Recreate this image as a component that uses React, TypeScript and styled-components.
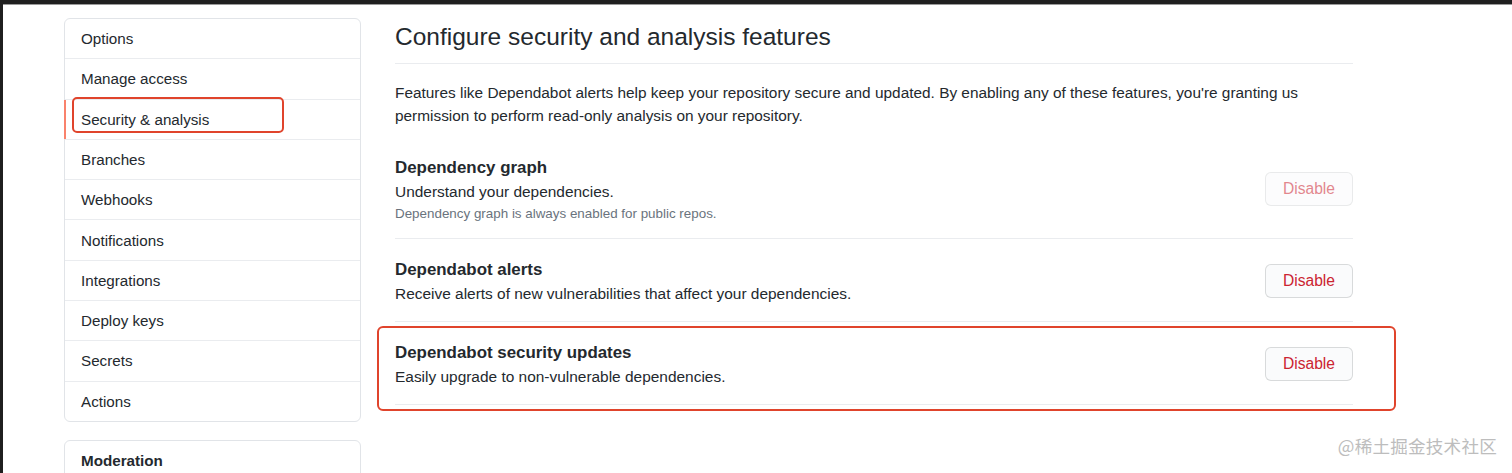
import React from "react";
import styled, { createGlobalStyle } from "styled-components";

const Global = createGlobalStyle`
  html, body { margin: 0; padding: 0; background: #fff; }
  body {
    font-family: "Liberation Sans", Arial, sans-serif;
    color: #24292e;
    -webkit-font-smoothing: antialiased;
  }
`;

const Frame = styled.div`
  position: relative;
  box-sizing: border-box;
  height: 473px;
  border-top: 4px solid #1f1f1f;
  border-left: 3px solid #1f1f1f;
  overflow: hidden;
`;

const TopLine = styled.div`
  height: 1px;
  background: #9a9a9a;
`;

const Layout = styled.div`
  display: flex;
  align-items: flex-start;
  gap: 34px;
  padding: 13px 0 0 61px;
`;

const Sidebar = styled.nav`
  width: 297px;
  flex: none;
  display: flex;
  flex-direction: column;
  gap: 18px;
`;

const Menu = styled.div<{ $tall?: boolean }>`
  border: 1px solid #e1e4e8;
  border-radius: 6px;
  background: #fff;
  min-height: ${(p) => (p.$tall ? "120px" : "0")};
`;

const MenuItem = styled.div<{ $selected?: boolean; $heading?: boolean }>`
  position: relative;
  padding: 9.15px 16px;
  font-size: 15.2px;
  line-height: 21px;
  font-weight: ${(p) => (p.$heading ? 700 : 400)};
  color: #24292e;
  border-bottom: 1px solid #eaecef;
  &:last-child { border-bottom: none; }
  ${(p) =>
    p.$selected &&
    `
    &::before {
      content: "";
      position: absolute;
      left: -1px;
      top: 0;
      bottom: 0;
      width: 2px;
      background: #f9826c;
    }
  `}
`;

const Callout = styled.div`
  position: absolute;
  border: 2.5px solid #e0442c;
  border-radius: 5px;
  pointer-events: none;
`;

const SideCallout = styled(Callout)`
  left: 7px;
  top: -3px;
  width: 208px;
  height: 32px;
`;

const Main = styled.main`
  width: 958px;
  flex: none;
`;

const Heading = styled.h2`
  margin: 1px 0 0;
  padding-bottom: 8px;
  border-bottom: 1px solid #eaecef;
  font-size: 24.5px;
  font-weight: 400;
  line-height: 36px;
  color: #24292e;
`;

const Intro = styled.p`
  margin: 17px 0 10px;
  font-size: 15.4px;
  line-height: 23px;
  color: #24292e;
`;

const Feature = styled.section`
  position: relative;
  display: flex;
  align-items: center;
  justify-content: space-between;
  padding: 19px 0 15px;
  border-bottom: 1px solid #eaecef;
`;

const FeatureText = styled.div`
  display: flex;
  flex-direction: column;
`;

const FeatureTitle = styled.h3`
  margin: 0;
  font-size: 16.9px;
  font-weight: 700;
  line-height: 24px;
  color: #24292e;
`;

const FeatureDesc = styled.div`
  font-size: 15.45px;
  line-height: 24px;
  color: #24292e;
`;

const FeatureNote = styled.div`
  font-size: 13.4px;
  line-height: 19px;
  color: #6a737d;
`;

const DangerButton = styled.button<{ $disabled?: boolean }>`
  width: 88px;
  height: 34px;
  box-sizing: border-box;
  margin-top: -2px;
  border: 1px solid rgba(27, 31, 35, 0.15);
  border-radius: 6px;
  background: #fafbfc;
  color: #cb2431;
  font-family: "Liberation Sans", Arial, sans-serif;
  font-size: 15.6px;
  font-weight: 500;
  padding: 0;
  cursor: pointer;
  opacity: ${(p) => (p.$disabled ? 0.55 : 1)};
`;

const MainCallout = styled(Callout)`
  left: -18px;
  top: 4px;
  right: -43px;
  bottom: -7px;
  border-radius: 6px;
`;

const Watermark = styled.div`
  position: absolute;
  right: 15px;
  bottom: 15px;
  font-family: "Noto Sans CJK SC", "Liberation Sans", sans-serif;
  font-size: 17.6px;
  color: #bdbdbd;
  letter-spacing: 0.2px;
`;

const menuItems = [
  "Options",
  "Manage access",
  "Security & analysis",
  "Branches",
  "Webhooks",
  "Notifications",
  "Integrations",
  "Deploy keys",
  "Secrets",
  "Actions",
];

export default function App() {
  return (
    <>
      <Global />
      <Frame>
        <TopLine />
        <Layout>
          <Sidebar>
            <Menu>
              {menuItems.map((m) => (
                <MenuItem key={m} $selected={m === "Security & analysis"}>
                  {m}
                  {m === "Security & analysis" && <SideCallout />}
                </MenuItem>
              ))}
            </Menu>
            <Menu $tall>
              <MenuItem $heading>Moderation</MenuItem>
            </Menu>
          </Sidebar>
          <Main>
            <Heading>Configure security and analysis features</Heading>
            <Intro>
              Features like Dependabot alerts help keep your repository secure and updated. By enabling any of
              these features, you're granting us permission to perform read-only analysis on your repository.
            </Intro>
            <Feature>
              <FeatureText>
                <FeatureTitle>Dependency graph</FeatureTitle>
                <FeatureDesc>Understand your dependencies.</FeatureDesc>
                <FeatureNote>Dependency graph is always enabled for public repos.</FeatureNote>
              </FeatureText>
              <DangerButton $disabled disabled>
                Disable
              </DangerButton>
            </Feature>
            <Feature>
              <FeatureText>
                <FeatureTitle>Dependabot alerts</FeatureTitle>
                <FeatureDesc>Receive alerts of new vulnerabilities that affect your dependencies.</FeatureDesc>
              </FeatureText>
              <DangerButton>Disable</DangerButton>
            </Feature>
            <Feature>
              <FeatureText>
                <FeatureTitle>Dependabot security updates</FeatureTitle>
                <FeatureDesc>Easily upgrade to non-vulnerable dependencies.</FeatureDesc>
              </FeatureText>
              <DangerButton>Disable</DangerButton>
              <MainCallout />
            </Feature>
          </Main>
        </Layout>
        <Watermark>@稀土掘金技术社区</Watermark>
      </Frame>
    </>
  );
}
